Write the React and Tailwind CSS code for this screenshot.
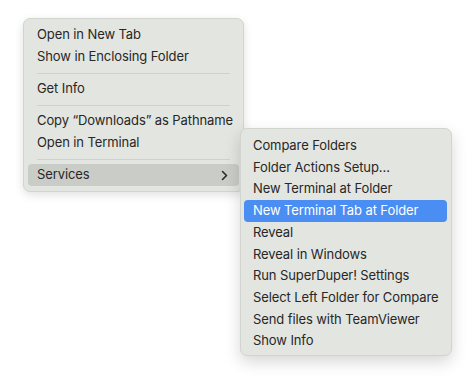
import React from "react";

const font = { fontFamily: "Inter, 'Noto Sans', sans-serif" };

function Row({ children, highlight, blue, chevron, h = "h-[22px]" }) {
  let cls = `${h} flex items-center justify-between pl-[9px] pr-[9px] rounded-[4px] text-[13px] tracking-[-0.1px] `;
  if (blue) cls += "bg-[#4a8df3] text-white";
  else if (highlight) cls += "bg-[#cacdc7] text-[#272727]";
  else cls += "text-[#272727]";
  return (
    <div className={cls}>
      <span className="whitespace-nowrap">{children}</span>
      {chevron && (
        <svg width="7" height="11" viewBox="0 0 7 11" className="mr-[2px]">
          <polyline points="1.5,1.5 5.5,5.5 1.5,9.5" fill="none" stroke="#2a2a2a" strokeWidth="1.6" strokeLinecap="round" strokeLinejoin="round" />
        </svg>
      )}
    </div>
  );
}

function Sep() {
  return (
    <div className="h-[10px] flex items-center px-[9px]">
      <div className="h-px w-full bg-[#cfd1cc]" />
    </div>
  );
}

export default function App() {
  const sub = [
    "Compare Folders",
    "Folder Actions Setup…",
    "New Terminal at Folder",
    "New Terminal Tab at Folder",
    "Reveal",
    "Reveal in Windows",
    "Run SuperDuper! Settings",
    "Select Left Folder for Compare",
    "Send files with TeamViewer",
    "Show Info",
  ];
  return (
    <div className="relative w-[474px] h-[382px] bg-white overflow-hidden" style={font}>
      <div className="ml-[23px] mt-[18px] w-[221px] rounded-[7px] bg-[#e3e5e0] border border-[#d2d4cf] px-[4px] pt-[5px] pb-[5px] shadow-[0_3px_10px_rgba(0,0,0,0.12)]">
        <Row>Open in New Tab</Row>
        <Row>Show in Enclosing Folder</Row>
        <Sep />
        <Row>Get Info</Row>
        <Sep />
        <Row>Copy “Downloads” as Pathname</Row>
        <Row>Open in Terminal</Row>
        <Sep />
        <Row highlight chevron>Services</Row>
      </div>
      <div className="absolute left-[240px] top-[128px] w-[212px] rounded-[7px] bg-[#e3e5e0] border border-[#d2d4cf] pl-[3px] pr-[4px] pt-[6px] pb-[3px] shadow-[0_6px_16px_rgba(0,0,0,0.16)]">
        {sub.map((s, i) => (
          <Row key={s} blue={i === 3} h="h-[21.7px]">{s}</Row>
        ))}
      </div>
    </div>
  );
}
